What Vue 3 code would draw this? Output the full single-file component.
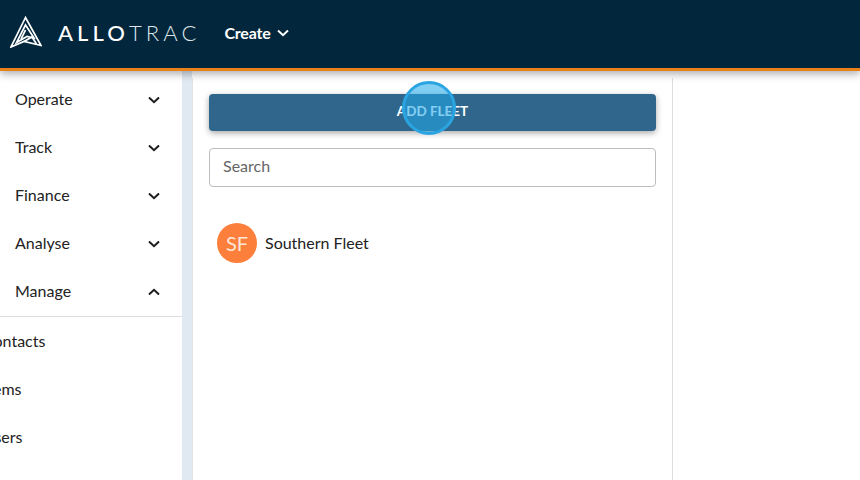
<script setup>
const menu = [
  { label: 'Operate', open: false },
  { label: 'Track', open: false },
  { label: 'Finance', open: false },
  { label: 'Analyse', open: false },
  { label: 'Manage', open: true },
]
const subItems = ['Contacts', 'Items', 'Users', 'Vehicles']
</script>

<template>
  <div class="page">
    <header class="topbar">
      <svg class="logo" viewBox="0 0 32 32" fill="none" stroke="#fff" stroke-width="1.7" stroke-linejoin="miter">
        <path d="M15.5 1.5 L1 31 L14 25.5 L31 29.5 Z" />
        <path d="M15.5 9 L6.5 26.5 L17 20.5 L24 22 Z" />
        <path d="M15.5 14 L11 23" />
        <path d="M14 25.5 L22 21 L26.5 28" />
      </svg>
      <div class="brand"><b>ALLO</b>TRAC</div>
      <div class="create">
        Create
        <svg class="chev-small" viewBox="0 0 12 8" fill="none" stroke="#fff" stroke-width="2"><path d="M1 1.5 L6 6.2 L11 1.5" /></svg>
      </div>
    </header>

    <div class="body">
      <aside class="sidebar">
        <div v-for="item in menu" :key="item.label" class="menu-row">
          <span>{{ item.label }}</span>
          <svg class="chev" :class="{ up: item.open }" viewBox="0 0 12 8" fill="none" stroke="#1c1c1c" stroke-width="2"><path d="M1 1.5 L6 6.2 L11 1.5" /></svg>
        </div>
        <div class="sub-list">
          <div v-for="sub in subItems" :key="sub" class="sub-row">{{ sub }}</div>
        </div>
      </aside>

      <main class="panel">
        <button class="add-btn">ADD FLEET</button>
        <div class="search">Search</div>
        <div class="fleet">
          <div class="avatar">SF</div>
          <span>Southern Fleet</span>
        </div>
      </main>
    </div>

    <div class="click-mark"></div>
  </div>
</template>

<style>
html, body { margin: 0; overflow: hidden; background: #fff; }
</style>

<style scoped>
.page {
  position: relative;
  width: 860px;
  height: 480px;
  overflow: hidden;
  font-family: Lato, "Liberation Sans", sans-serif;
  color: #222;
  display: flex;
  flex-direction: column;
}
.topbar {
  height: 64px;
  padding-bottom: 4px;
  flex: none;
  background: #02263c;
  border-bottom: 3px solid #e8811a;
  display: flex;
  align-items: center;
  color: #fff;
  position: relative;
  z-index: 2;
  box-shadow: 0 3px 8px rgba(0, 0, 0, .32);
}
.logo { width: 32px; height: 32px; margin-left: 10px; flex: none; }
.brand {
  margin-left: 16px;
  font-family: Lato, sans-serif;
  font-weight: 300;
  font-size: 22px;
  letter-spacing: 4.1px;
  color: #dfe6ea;
}
.brand b { font-weight: 500; color: #fff; }
.create {
  margin-left: 24px;
  font-size: 16px;
  font-weight: 700;
  letter-spacing: -.2px;
  display: flex;
  align-items: center;
  gap: 6px;
}
.chev-small { width: 12px; height: 8px; margin-top: 2px; }
.body { flex: 1; display: flex; min-height: 0; background: #fff; }
.sidebar {
  width: 192px;
  box-sizing: border-box;
  flex: none;
  background: #fff;
  border-right: 10px solid #e0e8f1;
  padding-top: 4px;
  overflow: hidden;
}
.menu-row {
  height: 48px;
  display: flex;
  align-items: center;
  justify-content: space-between;
  padding: 0 22px 0 15px;
  font-size: 16px;
  line-height: 46px;
}
.chev { width: 12px; height: 8px; margin-top: 1px; }
.chev.up { transform: rotate(180deg); }
.sub-list { border-top: 1px solid #ddd; margin-top: 1px; }
.sub-row {
  height: 48px;
  line-height: 48px;
  margin-left: -17px;
  font-size: 16px;
}
.panel {
  width: 481px;
  margin-top: 7px;
  flex: none;
  box-sizing: border-box;
  background: #fff;
  border-left: 1px solid #e4e4e4;
  border-right: 1px solid #ddd;
  padding: 16px 16px 0;
}
.add-btn {
  display: block;
  width: 100%;
  height: 37px;
  padding: 0 0 3px;
  border: 0;
  border-radius: 4px;
  background: #30668c;
  color: #fff;
  font: 700 13.5px Lato, sans-serif;
  box-shadow: 0 2px 6px rgba(0, 0, 0, .35);
}
.search {
  margin-top: 17px;
  height: 39px;
  box-sizing: border-box;
  border: 1px solid #bdbdbd;
  border-radius: 4px;
  padding-left: 13px;
  line-height: 34px;
  font-size: 16px;
  color: #666;
}
.fleet {
  margin-top: 36px;
  padding-left: 8px;
  display: flex;
  align-items: center;
  gap: 8px;
  font-size: 16px;
}
.fleet span { margin-top: -1px; }
.avatar {
  width: 40px;
  height: 40px;
  border-radius: 50%;
  background: #fd7f3c;
  color: #fde6d8;
  font-size: 20px;
  display: flex;
  align-items: center;
  justify-content: center;
}
.click-mark {
  position: absolute;
  left: 402px;
  top: 81px;
  width: 54px;
  height: 54px;
  box-sizing: border-box;
  border: 3px solid #2aa5e2;
  border-radius: 50%;
  background: rgba(34, 168, 234, .56);
  z-index: 3;
}
</style>
